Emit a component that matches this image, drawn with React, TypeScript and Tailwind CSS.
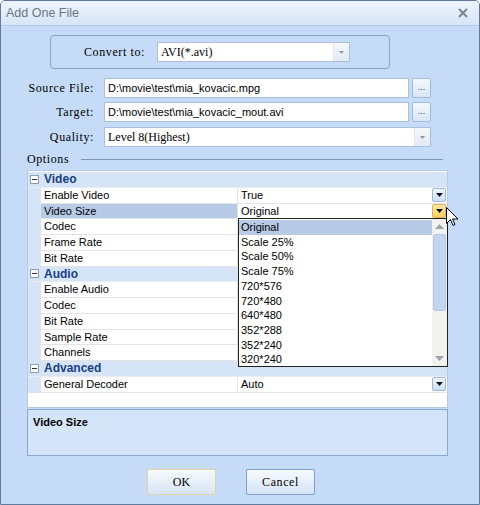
import React from "react";

const serif = { fontFamily: '"Liberation Serif", "DejaVu Serif", serif' };
const sans = { fontFamily: '"Liberation Sans", Arial, sans-serif' };

const DropArrow = ({ color = "#222" }: { color?: string }) => (
  <svg width="7" height="4" viewBox="0 0 7 4">
    <path d="M0 0h7L3.5 4z" fill={color} />
  </svg>
);

const CellButton = ({ hot = false }: { hot?: boolean }) => (
  <div
    className={`w-[14px] h-[14px] flex items-center justify-center border rounded-[2px] ${
      hot
        ? "border-[#e0b24c] bg-gradient-to-b from-[#fde8a6] to-[#f9cf63]"
        : "border-[#9fb8da] bg-gradient-to-b from-[#eef4fc] to-[#cfdff3]"
    }`}
  >
    <DropArrow color="#111" />
  </div>
);

const Category = ({ label }: { label: string }) => (
  <div className="flex h-[15.75px] bg-[#d5e4f6] items-center border-b border-[#e6edf7]">
    <div className="w-[13px] flex items-center justify-center">
      <div className="w-[9px] h-[9px] border border-[#8e9fb5] bg-white flex items-center justify-center">
        <div className="w-[5px] h-px bg-[#333]" />
      </div>
    </div>
    <span className="pl-[3px] text-[12px] font-bold text-[#173e86]">{label}</span>
  </div>
);

const Prop = ({
  name,
  value = "",
  selected = false,
  button = false,
  hot = false,
}: {
  name: string;
  value?: string;
  selected?: boolean;
  button?: boolean;
  hot?: boolean;
}) => (
  <div className="flex h-[15.75px] bg-[#d5e4f6]">
    <div className="w-[13px] shrink-0" />
    <div
      className={`w-[197px] shrink-0 flex items-center pl-[3px] border-b border-r border-[#e4e4e4] ${
        selected ? "bg-[#b7cae6]" : "bg-white"
      }`}
    >
      {name}
    </div>
    <div className="flex-1 bg-white flex items-center pl-[3px] border-b border-[#e4e4e4] relative">
      <span className="flex-1">{value}</span>
      {button && (
        <div className="pr-[1px]">
          <CellButton hot={hot} />
        </div>
      )}
    </div>
  </div>
);

const Browse = () => (
  <div className="w-[19px] h-[20px] ml-[3px] border border-[#a3bcdc] rounded-[2px] bg-gradient-to-b from-[#f4f8fd] to-[#d9e6f6] flex items-end justify-center pb-[5px] text-[9px] text-[#333] leading-none">
    ...
  </div>
);

const ComboBtn = () => (
  <div className="w-[16px] h-full border-l border-[#dfe7f2] bg-gradient-to-b from-[#f5f8fc] to-[#e2eaf4] flex items-center justify-center">
    <svg width="5" height="3" viewBox="0 0 5 3">
      <path d="M0 0h5L2.5 3z" fill="#8a96a6" />
    </svg>
  </div>
);

const items = [
  "Original",
  "Scale 25%",
  "Scale 50%",
  "Scale 75%",
  "720*576",
  "720*480",
  "640*480",
  "352*288",
  "352*240",
  "320*240",
];

export default function App() {
  return (
    <div
      className="relative w-[480px] h-[505px] bg-[#c5dbf7] border border-[#62799e] rounded-t-[5px] overflow-hidden text-[11px] text-black"
      style={sans}
    >
      {/* title bar */}
      <div className="h-[25px] flex items-center justify-between px-[5px] bg-gradient-to-b from-[#eef4fc] to-[#d6e5f7] border-b border-[#b3c9e6]">
        <span className="text-[12.5px] text-[#6a7585]">Add One File</span>
        <svg width="10" height="10" viewBox="0 0 10 10" className="mr-[6px]">
          <path d="M1 1l8 8M9 1l-8 8" stroke="#7c8593" strokeWidth="2" />
        </svg>
      </div>

      {/* convert to group */}
      <div className="ml-[49px] mt-[9px] w-[340px] h-[34px] border border-[#8aa6cc] rounded-[4px] flex items-center pl-[33px]">
        <span className="w-[73px] text-[12px] tracking-[0.6px]" style={serif}>
          Convert to:
        </span>
        <div className="w-[193px] h-[20px] bg-white border border-[#a9bfdc] flex items-center">
          <span className="flex-1 pl-[3px] text-[12px]" style={serif}>
            AVI(*.avi)
          </span>
          <ComboBtn />
        </div>
      </div>

      {/* file rows */}
      <div className="mt-[9px] flex items-center h-[20px]">
        <span className="w-[93px] text-right text-[12px] tracking-[0.6px]" style={serif}>
          Source File:
        </span>
        <div className="ml-[10px] w-[305px] h-full bg-white border border-[#a9bfdc] flex items-center pl-[3px]">
          D:\movie\test\mia_kovacic.mpg
        </div>
        <Browse />
      </div>
      <div className="mt-[4px] flex items-center h-[20px]">
        <span className="w-[93px] text-right text-[12px] tracking-[0.6px]" style={serif}>
          Target:
        </span>
        <div className="ml-[10px] w-[305px] h-full bg-white border border-[#a9bfdc] flex items-center pl-[3px]">
          D:\movie\test\mia_kovacic_mout.avi
        </div>
        <Browse />
      </div>
      <div className="mt-[5px] flex items-center h-[20px]">
        <span className="w-[93px] text-right text-[12px] tracking-[0.6px]" style={serif}>
          Quality:
        </span>
        <div className="ml-[10px] w-[327px] h-full bg-white border border-[#a9bfdc] flex items-center">
          <span className="flex-1 pl-[3px] text-[12px]" style={serif}>
            Level 8(Highest)
          </span>
          <ComboBtn />
        </div>
      </div>

      {/* options */}
      <div className="mt-[6px] ml-[26px] mr-[36px] flex items-center h-[12px]">
        <span className="text-[12px] tracking-[0.6px]" style={serif}>
          Options
        </span>
        <div className="ml-[12px] flex-1 h-px bg-[#7f97b9]" />
      </div>

      {/* property grid */}
      <div className="relative ml-[26px] mt-[5px] w-[421px] h-[238px] bg-white border border-[#b5cae6] pt-[1px]">
        <Category label="Video" />
        <Prop name="Enable Video" value="True" button />
        <Prop name="Video Size" value="Original" selected button hot />
        <Prop name="Codec" />
        <Prop name="Frame Rate" />
        <Prop name="Bit Rate" />
        <Category label="Audio" />
        <Prop name="Enable Audio" />
        <Prop name="Codec" />
        <Prop name="Bit Rate" />
        <Prop name="Sample Rate" />
        <Prop name="Channels" />
        <Category label="Advanced" />
        <Prop name="General Decoder" value="Auto" button />

        {/* open dropdown list */}
        <div className="absolute left-[210px] top-[47px] w-[210px] h-[149px] bg-white border border-[#222] flex">
          <div className="flex-1 flex flex-col pt-[1px]">
            {items.map((it, i) => (
              <div
                key={it}
                className={`h-[14.7px] flex items-center pl-[2px] ${
                  i === 0 ? "bg-[#b7cae6]" : ""
                }`}
              >
                {it}
              </div>
            ))}
          </div>
          <div className="w-[15px] bg-[#f2f2ef] flex flex-col items-center">
            <div className="h-[15px] flex items-center justify-center">
              <svg width="9" height="5" viewBox="0 0 9 5">
                <path d="M0 5h9L4.5 0z" fill="#9aa3ad" />
              </svg>
            </div>
            <div className="w-[13px] h-[77px] bg-[#c3d5f0] border border-[#b3c7e6] rounded-[2px]" />
            <div className="flex-1" />
            <div className="h-[15px] flex items-center justify-center">
              <svg width="9" height="5" viewBox="0 0 9 5">
                <path d="M0 0h9L4.5 5z" fill="#9aa3ad" />
              </svg>
            </div>
          </div>
        </div>
      </div>

      {/* description */}
      <div className="ml-[26px] mt-[1px] w-[421px] h-[47px] bg-[#d5e5f9] border border-[#8ca8ce] px-[5px] pt-[4px]">
        <span className="font-bold text-[11px]">Video Size</span>
      </div>

      {/* buttons */}
      <div className="mt-[13px] flex pl-[146px] gap-[30px]">
        <div
          className="w-[69px] h-[26px] border border-[#e1d3a0] rounded-[2px] bg-gradient-to-b from-[#f7fafe] to-[#d6e4f6] flex items-center justify-center text-[12px]"
          style={serif}
        >
          OK
        </div>
        <div
          className="w-[69px] h-[26px] border border-[#7f9fc9] rounded-[2px] bg-gradient-to-b from-[#f7fafe] to-[#d6e4f6] flex items-center justify-center text-[12px] tracking-[0.6px]"
          style={serif}
        >
          Cancel
        </div>
      </div>

      {/* mouse cursor */}
      <svg
        className="absolute left-[445px] top-[206px]"
        width="12"
        height="20"
        viewBox="0 0 12 20"
      >
        <path
          d="M0.5 0.5v16l4-4 2.5 6 2-1-2.5-5.5h5.5z"
          fill="#fff"
          stroke="#000"
          strokeWidth="1"
          strokeLinejoin="round"
        />
      </svg>
    </div>
  );
}
